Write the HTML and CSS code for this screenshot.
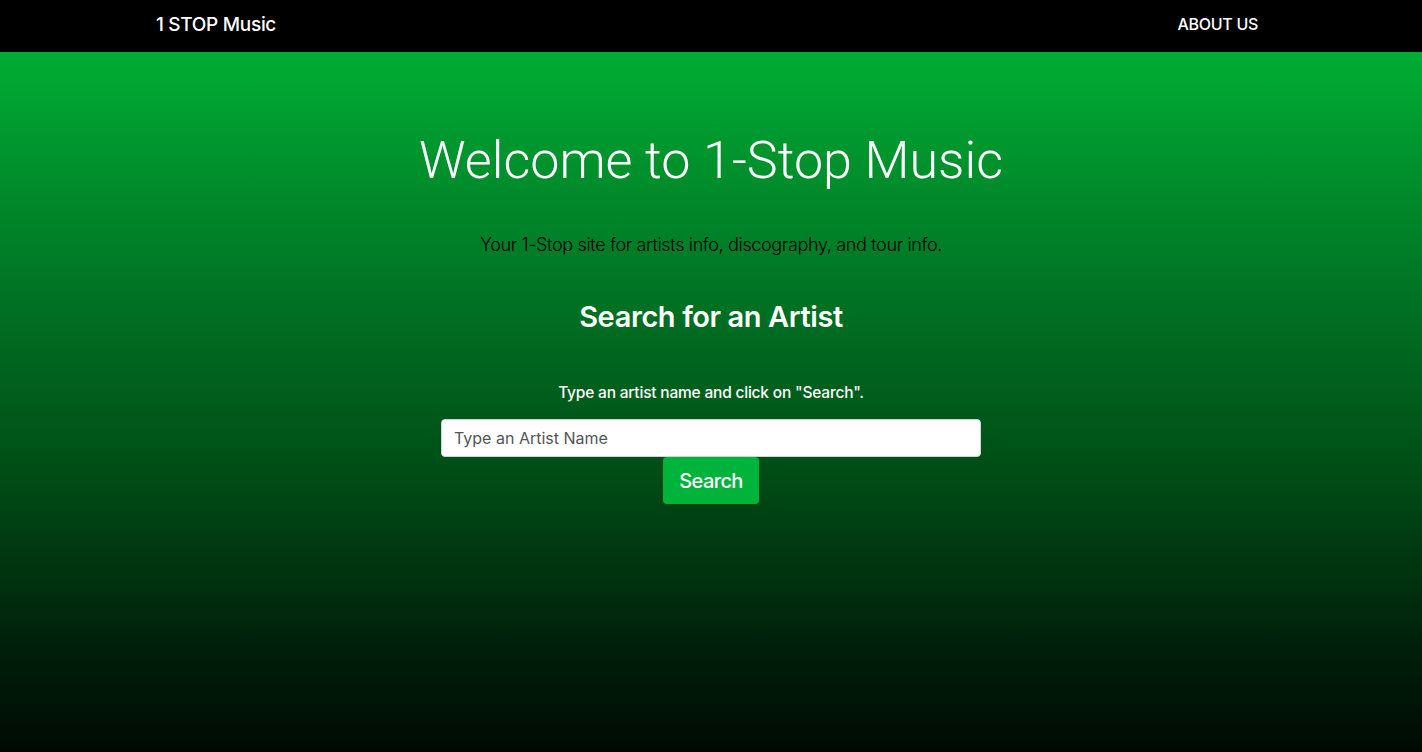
FILE: index.html
```html
<!DOCTYPE html>
<html lang="en">
<head>
<meta charset="utf-8">
<title>1 STOP Music</title>
<link rel="stylesheet" href="styles.css">
</head>
<body>
<nav class="navbar">
  <div class="container nav-inner">
    <a class="brand" href="#">1 STOP Music</a>
    <a class="nav-link" href="#">ABOUT US</a>
  </div>
</nav>
<main class="hero">
  <div class="container hero-inner">
    <h1 class="title">Welcome to 1-Stop Music</h1>
    <p class="lead">Your 1-Stop site for artists info, discography, and tour info.</p>
    <h2 class="subtitle">Search for an Artist</h2>
    <p class="hint">Type an artist name and click on "Search".</p>
    <form class="search">
      <input class="search-input" type="text" placeholder="Type an Artist Name">
      <button class="search-btn" type="button">Search</button>
    </form>
  </div>
</main>
</body>
</html>
```

FILE: styles.css
```css
* { box-sizing: border-box; }
html, body { height: 100%; }
body {
  margin: 0;
  font-family: "Inter", "Liberation Sans", Arial, sans-serif;
  background: #000;
  display: flex;
  flex-direction: column;
}
.container {
  width: 1140px;
  margin: 0 auto;
  padding: 0 15px;
}
.navbar {
  background: #000;
  height: 52px;
  flex: none;
}
.nav-inner {
  height: 100%;
  display: flex;
  align-items: center;
  justify-content: space-between;
}
.brand {
  color: #fff;
  text-decoration: none;
  font-size: 19px;
  font-weight: 500;
  letter-spacing: -0.3px;
  margin-top: -4px;
}
.nav-link {
  color: #fff;
  text-decoration: none;
  font-size: 16px;
  font-weight: 500;
  padding: 0 8px;
  margin-top: -4px;
  letter-spacing: -0.3px;
}
.hero {
  flex: 1;
  background: linear-gradient(to bottom, #00ad34 0%, #007a26 30%, #004d16 60%, #00200a 85%, #000a03 100%);
}
.hero-inner {
  display: flex;
  flex-direction: column;
  align-items: center;
  text-align: center;
}
.title {
  margin: 78px 0 0;
  color: #fff;
  font-family: "Roboto", "Liberation Sans", sans-serif;
  font-weight: 300;
  font-size: 52px;
  line-height: 1.2;
}
.lead {
  margin: 39px 0 0;
  color: #000;
  font-weight: 300;
  font-size: 18px;
  line-height: 1.5;
  letter-spacing: -0.35px;
}
.subtitle {
  margin: 42px 0 0;
  color: #fff;
  font-weight: 600;
  font-size: 29px;
  line-height: 1.2;
  letter-spacing: -0.4px;
}
.hint {
  margin: 46px 0 0;
  color: #fff;
  font-weight: 500;
  font-size: 15.5px;
  line-height: 1.5;
  letter-spacing: -0.2px;
}
.search {
  margin-top: 15px;
  display: flex;
  flex-direction: column;
  align-items: center;
}
.search-input {
  width: 540px;
  height: 38px;
  border: 1px solid #ced4da;
  border-radius: 4px;
  padding: 6px 12px;
  font-family: inherit;
  font-size: 16px;
  color: #495057;
  background: #fff;
}
.search-input::placeholder { color: #555; }
.search-btn {
  height: 47px;
  padding: 0 16px;
  border: none;
  border-radius: 4px;
  background: #00b43b;
  color: #fff;
  font-family: inherit;
  font-size: 20px;
  font-weight: 500;
  letter-spacing: -0.6px;
}
```
